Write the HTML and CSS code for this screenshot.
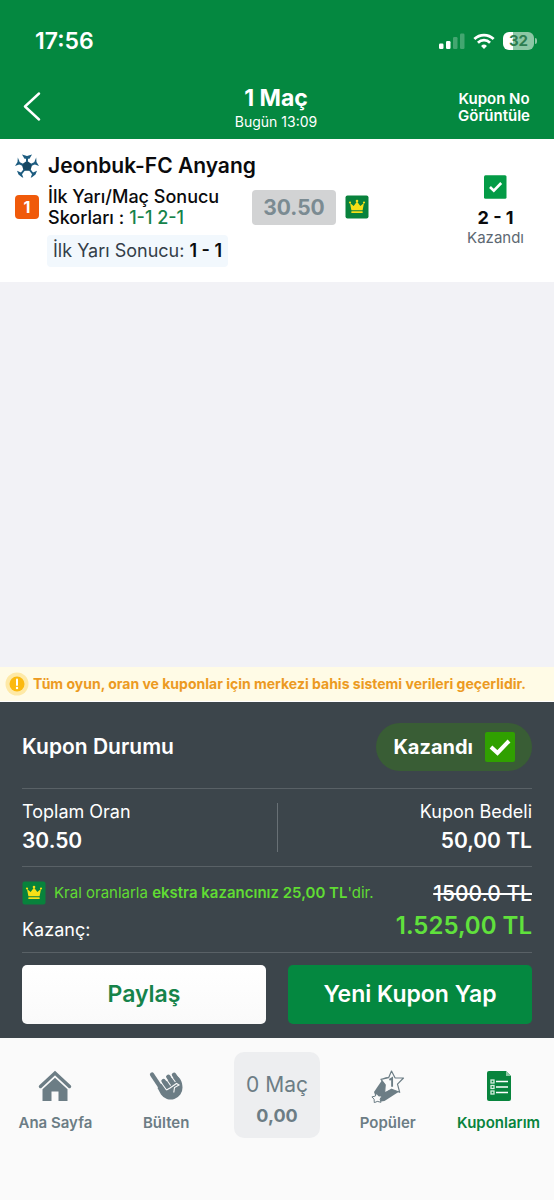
FILE: index.html
```html
<!DOCTYPE html>
<html lang="tr">
<head>
<meta charset="utf-8">
<meta name="viewport" content="width=device-width, initial-scale=1">
<title>Kupon Detayı</title>
<link rel="stylesheet" href="styles.css">
</head>
<body>
<svg class="sprite" aria-hidden="true">
  <symbol id="crown" viewBox="0 0 24 24">
    <rect x="0.5" y="0.5" width="23" height="23" rx="2" fill="#08823c"/>
    <path d="M5 8l3.700 3L12 6.500l3.300 4.500L19 8l-1.400 7.300H6.400z" fill="#f6e017"/>
    <rect x="6.300" y="16.200" width="11.400" height="1.900" rx="0.500" fill="#f6e017"/>
    <circle cx="5" cy="7.500" r="1.100" fill="#f6e017"/><circle cx="12" cy="6" r="1.300" fill="#f6e017"/><circle cx="19" cy="7.500" r="1.100" fill="#f6e017"/>
  </symbol>
</svg>
<header class="header">
  <div class="status">
    <span class="clock">17:56</span>
    <div class="status-icons">
      <svg width="26" height="18" viewBox="0 0 26 18" fill="#fff" aria-hidden="true">
        <rect x="0" y="11.500" width="4.500" height="5.500" rx="1.200"/><rect x="7" y="9" width="4.500" height="8" rx="1.200"/>
        <rect x="14" y="5" width="4.500" height="12" rx="1.200" opacity=".25"/><rect x="21" y="1.500" width="4.500" height="15.500" rx="1.200" opacity=".25"/>
      </svg>
      <svg width="22" height="17" viewBox="0 0 24 18" fill="none" stroke="#fff" stroke-width="3" aria-hidden="true">
        <path d="M1.500 6.300a15 15 0 0 1 21 0"/><path d="M5.400 10.300a9.500 9.500 0 0 1 13.200 0"/><path d="M12 17.200l-3.200-3.300a4.600 4.600 0 0 1 6.400 0z" fill="#fff" stroke="none"/>
      </svg>
      <span class="battery">32</span>
    </div>
  </div>
  <div class="nav">
    <button class="back" type="button" aria-label="Geri">
      <svg width="20" height="30" viewBox="0 0 20 30" fill="none" stroke="#fff" stroke-width="2.400" stroke-linecap="round" stroke-linejoin="round"><path d="M17 1.500L3 14.500l14 13"/></svg>
    </button>
    <div class="nav-title"><h1>1 Maç</h1><p>Bugün 13:09</p></div>
    <button class="nav-action" type="button">Kupon No<br>Görüntüle</button>
  </div>
</header>

<main class="content">
  <article class="match">
    <div class="match-main">
      <div class="match-title">
        <svg width="24" height="24" viewBox="0 0 24 24" fill="#1d5c80" aria-hidden="true">
          <path d="M12 6.800l5.300 3.800-2 6.200H8.700l-2-6.200z" fill="#164763"/>
          <path d="M12 8V3M16 11l5-2.500M14.500 15.500l3.500 4.500M9.500 15.500L6 20M8 11L3 8.500" stroke="#1d5c80" stroke-width="2"/>
          <path d="M7 .6L12 2l5-1.400L14.500 4.800h-5zM21.200 3.500l.3 4.500 2.500 4-4.800-1.800.4-3zM22 16.800l-4.500 2-1.800 4.900 1.300-.4 3.500-2.700zM2 16.800l4.500 2 1.800 4.900-1.300-.4-3.500-2.700zM2.800 3.500L2.500 8 0 12l4.800-1.800-.4-3z"/>
        </svg>
        <h2>Jeonbuk-FC Anyang</h2>
      </div>
      <div class="bet">
        <span class="mbs">1</span>
        <div class="market">
          <span>İlk Yarı/Maç Sonucu</span>
          <div class="market-line"><span>Skorları :</span><span class="picks">1-1 2-1</span></div>
        </div>
        <span class="odd">30.50</span>
        <svg class="crown" aria-hidden="true"><use href="#crown"/></svg>
      </div>
      <p class="half">İlk Yarı Sonucu: <b>1 - 1</b></p>
    </div>
    <div class="result">
      <svg width="23" height="24" viewBox="0 0 23 24" aria-hidden="true"><rect width="22.500" height="23.500" rx="1.500" y=".2" fill="#049b46"/><path d="M6 12l3.800 3.700 7.400-7.700" fill="none" stroke="#fff" stroke-width="2.600"/></svg>
      <strong>2 - 1</strong>
      <span>Kazandı</span>
    </div>
  </article>
</main>

<div class="notice">
  <svg width="24" height="24" viewBox="0 0 24 24" aria-hidden="true"><circle cx="12" cy="12" r="11.500" fill="#fee9a6"/><circle cx="12" cy="12" r="7.500" fill="#fbb90f"/><path d="M12 7.500v5.500" stroke="#fff" stroke-width="2" stroke-linecap="round"/><circle cx="12" cy="16" r="1.200" fill="#fff"/></svg>
  <p>Tüm oyun, oran ve kuponlar için merkezi bahis sistemi verileri geçerlidir.</p>
</div>

<section class="summary">
  <div class="row state">
    <h2>Kupon Durumu</h2>
    <span class="pill">Kazandı
      <svg width="30" height="30" viewBox="0 0 30 30" aria-hidden="true"><rect width="30" height="30" rx="2" fill="#30a000"/><path d="M6 15l6.500 6L24 9" fill="none" stroke="#fff" stroke-width="4"/></svg>
    </span>
  </div>
  <div class="row totals">
    <div class="total"><span>Toplam Oran</span><b>30.50</b></div>
    <div class="total right"><span>Kupon Bedeli</span><b>50,00 TL</b></div>
  </div>
  <div class="row gain">
    <div class="gain-info">
      <p class="bonus"><svg class="crown" aria-hidden="true"><use href="#crown"/></svg><span>Kral oranlarla <b>ekstra kazancınız 25,00 TL</b>'dir.</span></p>
      <span>Kazanç:</span>
    </div>
    <div class="gain-values"><s>1500.0 TL</s><strong>1.525,00 TL</strong></div>
  </div>
  <div class="actions">
    <button class="btn light" type="button">Paylaş</button>
    <button class="btn green" type="button">Yeni Kupon Yap</button>
  </div>
</section>

<nav class="tabs">
  <a class="tab" href="#home">
    <svg width="34" height="34" viewBox="0 0 34 34" aria-hidden="true"><path d="M2.500 17.500L17 4l14.500 13.500" fill="none" stroke="#6c7d85" stroke-width="3.400" stroke-linecap="round" stroke-linejoin="miter"/><path d="M17 8.800L29.500 20.300V32h-9v-9.500h-7V32h-9V20.300z" fill="#6c7d85"/></svg>
    Ana Sayfa
  </a>
  <a class="tab" href="#program">
    <svg width="34" height="34" viewBox="0 0 34 34" aria-hidden="true">
      <path d="M3 5.500L14 22" stroke="#6c7d85" stroke-width="4.200" stroke-linecap="round"/>
      <path d="M12 15l6-3 10-5c3 1.500 5.500 6 5.500 11.500a11.800 11.800 0 0 1-21.500 7L8.500 19z" fill="#6c7d85"/>
      <g stroke="#6c7d85" stroke-width="4.400" stroke-linecap="round"><path d="M14.500 12l5 7M19.300 7.800l4.200 6M25 5.800l3 4.500"/></g>
      <path d="M11.800 13l5.700 8M16.800 9.500l4.800 7M22.400 7.500l4 5.500M17.500 21l3.500-2 6.500-4.500 2.500 1.500-4.500 2.500-.7 5" fill="none" stroke="#fafafa" stroke-width="1.100"/>
    </svg>
    Bülten
  </a>
  <button class="slip" type="button"><span>0 Maç</span><b>0,00</b></button>
  <a class="tab" href="#popular">
    <svg width="34" height="34" viewBox="0 0 34 34" aria-hidden="true">
      <path d="M3 23l9.500-14 4-1 11 15-14 9-7 1z" fill="#6c7d85"/>
      <path d="M20.500 2l3.500 6.800 8.500.2-6 6.100 2.200 8.200-8.200-3.100-6.900 3.800.6-8.200-4.200-5.500 7.600-1.600z" fill="#fafafa" stroke="#6c7d85" stroke-width="1.200" stroke-linejoin="round"/>
      <path d="M5.700 24l1.800 2.900 3.500.1-1.900 3.100.9 3.200-3.700-.9-3 1.300-.2-3.500-2.200-2.300 3.400-.8z" fill="#fafafa" stroke="#6c7d85" stroke-width="1"/>
      <path d="M18.400 10.900l2.700-1.700v8.600" fill="none" stroke="#6c7d85" stroke-width="1.900"/>
    </svg>
    Popüler
  </a>
  <a class="tab active" href="#coupons" aria-current="page">
    <svg width="34" height="34" viewBox="0 0 34 34" aria-hidden="true"><path d="M7 2h17l5 5v23a2 2 0 0 1-2 2H7a2 2 0 0 1-2-2V4a2 2 0 0 1 2-2z" fill="#08843d"/><path d="M24 2v5h5z" fill="#8dc7a4"/><path d="M14 12.500h12M14 18h12M14 23.500h12" stroke="#fff" stroke-width="1.300"/><g fill="none" stroke="#d7f0df" stroke-width="1.300"><rect x="9" y="11" width="3" height="3"/><rect x="9" y="16.500" width="3" height="3"/><rect x="9" y="22" width="3" height="3"/></g></svg>
    Kuponlarım
  </a>
</nav>
</body>
</html>
```
FILE: styles.css
```css
* { box-sizing: border-box; }
body {
  margin: 0;
  min-height: 100vh;
  display: flex;
  flex-direction: column;
  background: #f2f2f6;
  color: #0b0b0d;
  font-family: Inter, "Noto Sans", sans-serif;
}
h1, h2, p { margin: 0; }
button { border: 0; padding: 0; background: none; color: inherit; font: inherit; cursor: pointer; }
svg { display: block; flex: none; }
.sprite { position: absolute; width: 0; height: 0; }

.header { background: #048840; color: #fff; }
.status { display: flex; justify-content: space-between; align-items: center; padding: 28px 17px 0 35px; }
.clock { font-size: 23px; line-height: 26px; font-weight: 600; }
.status-icons { display: flex; align-items: center; gap: 8px; }
.battery {
  position: relative;
  width: 31px;
  margin-right: 3px;
  border-radius: 6px;
  background: linear-gradient(90deg, #fff 33%, #8cc7a5 33%);
  color: #2d7d50;
  font-size: 15px;
  line-height: 18px;
  font-weight: 700;
  text-align: center;
}
.battery::after {
  content: "";
  position: absolute;
  left: 32px;
  top: 6px;
  width: 2px;
  height: 6px;
  border-radius: 0 2px 2px 0;
  background: #8cc7a5;
}
.nav { display: grid; grid-template-columns: 1fr auto 1fr; align-items: center; padding: 28px 24px 7px 22px; }
.back { justify-self: start; }
.nav-title { padding-top: 2px; text-align: center; }
.nav-title h1 { font-size: 23px; line-height: 28px; font-weight: 700; }
.nav-title p { font-size: 14px; line-height: 20px; }
.nav-action { justify-self: end; font-size: 15px; line-height: 17px; font-weight: 600; }

.content { flex: 1; }
.match { display: flex; justify-content: space-between; padding: 14px 30px 15px 15px; background: #fff; }
.match-title { display: flex; align-items: center; gap: 9px; }
.match-title h2 { font-size: 21px; line-height: 26px; font-weight: 600; }
.bet { display: flex; align-items: center; gap: 9px; margin-top: 7px; }
.mbs { width: 24px; border-radius: 4px; background: #f05a0a; color: #fff; font-size: 16px; line-height: 24px; font-weight: 700; text-align: center; }
.market { width: 195px; font-size: 18px; line-height: 21px; font-weight: 500; }
.market-line { display: flex; gap: 5px; }
.picks { color: #16834a; }
.odd { width: 84px; border-radius: 4px; background: #d2d3d4; color: #7b8b92; font-size: 21px; line-height: 35px; font-weight: 700; text-align: center; }
.crown { width: 24px; height: 24px; }
.half { width: fit-content; margin: 7px 0 0 32px; padding: 0 6px; border-radius: 4px; background: #f2f8fd; color: #343e48; font-size: 18px; line-height: 32px; }
.half b { font-weight: 600; color: #0b0b0d; }
.result { display: flex; flex-direction: column; align-items: center; padding-top: 22px; }
.result strong { margin-top: 8px; font-size: 18px; line-height: 22px; }
.result span { font-size: 15px; line-height: 18px; color: #5d6872; }

.notice { display: flex; align-items: center; gap: 4px; padding: 5px; background: #fffbe6; color: #ec9a22; border-bottom: 1px solid #fff; }
.notice p { font-size: 14px; line-height: 22px; font-weight: 700; }

.summary { padding: 0 22px 14px; background: #3c454b; color: #fff; }
.row { display: flex; justify-content: space-between; border-bottom: 1px solid #596166; }
.state { align-items: center; padding: 21px 0 17px; }
.state h2 { font-size: 21px; line-height: 26px; font-weight: 600; }
.pill { display: flex; align-items: center; gap: 12px; padding: 9px 17px; border-radius: 24px; background: #395d35; font-size: 20px; line-height: 30px; font-weight: 700; }
.totals { padding: 14px 0; }
.total { display: flex; flex: 1; flex-direction: column; }
.total span { font-size: 18px; line-height: 18px; }
.total b { margin-top: 9px; font-size: 21px; line-height: 22px; font-weight: 600; }
.right { text-align: right; border-left: 1px solid #687075; }
.gain { padding: 13px 0 10px; }
.bonus { display: flex; align-items: center; gap: 8px; margin-bottom: 12px; color: #60dc33; font-size: 15px; line-height: 26px; }
.bonus b { font-weight: 600; }
.gain-info { font-size: 18px; line-height: 24px; }
.gain-values { display: flex; flex-direction: column; text-align: right; }
.gain-values s { font-size: 21px; line-height: 28px; font-weight: 500; text-decoration-thickness: 2px; }
.gain-values strong { margin-top: 3px; color: #60e13c; font-size: 24px; line-height: 30px; font-weight: 600; }
.actions { display: grid; grid-template-columns: 1fr 1fr; gap: 22px; padding-top: 12px; }
.btn { border-radius: 5px; font-size: 23px; line-height: 59px; font-weight: 600; }
.light { background: linear-gradient(#fff, #fafafa); color: #16834a; }
.green { background: #048840; color: #fff; }

.tabs { display: grid; grid-template-columns: repeat(5, 1fr); justify-items: center; padding: 14px 0 62px; background: #fafafa; color: #6c7d85; }
.tab { display: flex; flex-direction: column; align-items: center; gap: 9px; padding-top: 17px; color: inherit; font-size: 15px; line-height: 22px; font-weight: 600; text-decoration: none; }
.active { color: #08843d; }
.slip { display: flex; flex-direction: column; align-items: center; justify-content: center; gap: 4px; width: 86px; height: 86px; padding-top: 10px; border-radius: 10px; background: #edeef0; }
.slip span { font-size: 21px; line-height: 28px; }
.slip b { font-size: 18px; line-height: 26px; }
```
